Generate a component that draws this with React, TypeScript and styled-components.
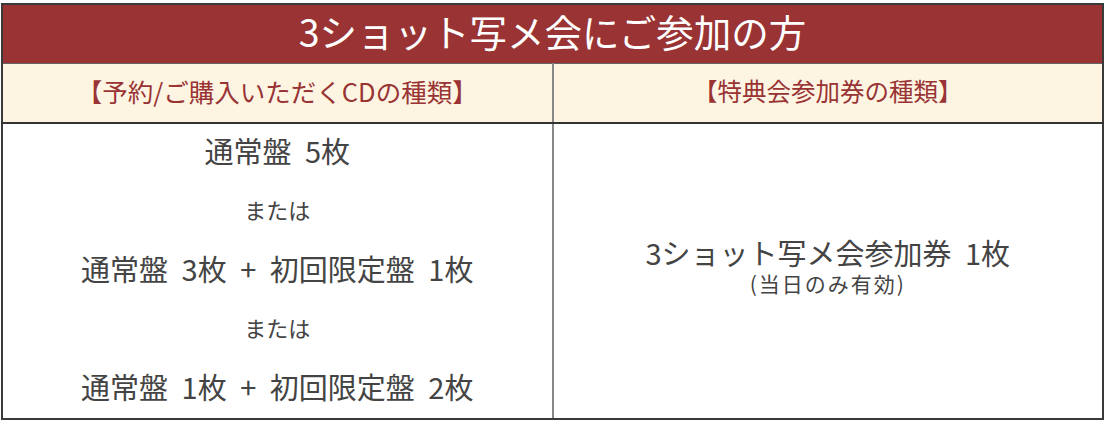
import styled, { createGlobalStyle } from "styled-components";

const GlobalStyle = createGlobalStyle`
  html, body {
    margin: 0;
    padding: 0;
    background: #fff;
  }
  body {
    font-family: "Noto Sans CJK JP", "Noto Sans", sans-serif;
    color: #444;
  }
`;

const Wrap = styled.div`
  padding: 3px 1px 0 1px;
`;

const Table = styled.table`
  width: 1103px;
  border-collapse: collapse;
  border: 2px solid #3a3a3a;
  table-layout: fixed;
`;

const Title = styled.th`
  height: 52px;
  padding: 0 0 6px;
  background: #993334;
  color: #fff;
  font-size: 37.5px;
  font-weight: 400;
  line-height: 44px;
  text-align: center;
  border-bottom: 1px solid #666;
`;

const HeadCell = styled.th<{ $wide?: boolean }>`
  height: 53px;
  padding: 0 0 5px;
  background: #fdf5e2;
  color: #993334;
  font-size: ${(p) => (p.$wide ? "25.5px" : "24.5px")};
  font-weight: 400;
  line-height: 30px;
  text-align: center;
  border-bottom: 2px solid #333;
  & + & {
    border-left: 2px solid #888;
  }
`;

const Cell = styled.td<{ $small?: boolean }>`
  height: 52px;
  padding: 0 0 6px;
  text-align: center;
  font-size: ${(p) => (p.$small ? "22px" : "29px")};
  word-spacing: 7px;
  line-height: 36px;
  color: #444;
  border-bottom: 1px solid #fff;
  border-right: 2px solid #888;
`;

const Ticket = styled.td`
  padding: 0 0 12px;
  text-align: center;
  vertical-align: middle;
  border-bottom: 2px solid #3a3a3a;
`;

const TicketName = styled.div`
  font-size: 29px;
  line-height: 36px;
  word-spacing: 7px;
  color: #444;
`;

const TicketNote = styled.div`
  font-size: 21px;
  line-height: 26px;
  letter-spacing: 2px;
  color: #444;
`;

const rows = [
  { text: "通常盤 5枚" },
  { text: "または", small: true },
  { text: "通常盤 3枚 + 初回限定盤 1枚" },
  { text: "または", small: true },
  { text: "通常盤 1枚 + 初回限定盤 2枚" },
];

export default function App() {
  return (
    <Wrap>
      <GlobalStyle />
      <Table>
        <thead>
          <tr>
            <Title colSpan={2}>3ショット写メ会にご参加の方</Title>
          </tr>
          <tr>
            <HeadCell $wide>【予約/ご購入いただくCDの種類】</HeadCell>
            <HeadCell>【特典会参加券の種類】</HeadCell>
          </tr>
        </thead>
        <tbody>
          {rows.map((r, i) => (
            <tr key={i}>
              <Cell $small={r.small}>{r.text}</Cell>
              {i === 0 && (
                <Ticket rowSpan={rows.length}>
                  <TicketName>3ショット写メ会参加券 1枚</TicketName>
                  <TicketNote>(当日のみ有効)</TicketNote>
                </Ticket>
              )}
            </tr>
          ))}
        </tbody>
      </Table>
    </Wrap>
  );
}
